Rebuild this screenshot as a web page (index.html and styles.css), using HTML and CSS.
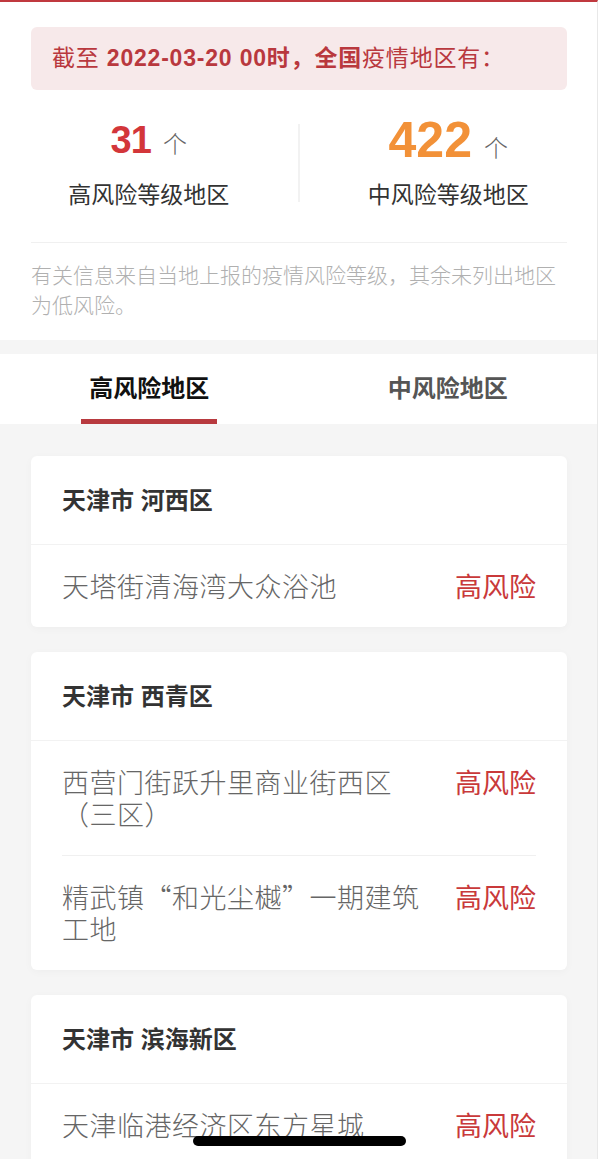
FILE: index.html
```html
<!DOCTYPE html>
<html lang="zh-CN">
<head>
    <meta charset="UTF-8">
    <meta name="viewport" content="width=device-width, initial-scale=1.0">
    <title>风险等级地区</title>
    <link rel="stylesheet" href="styles.css">
</head>
<body>
<div class="page">
    <section class="summary">
        <div class="notice">截至 <strong>2022-03-20 00时，全国</strong>疫情地区有：</div>
        <div class="stats">
            <div class="stat">
                <div class="stat-num"><span class="num high">31</span><span class="unit">个</span></div>
                <div class="stat-label">高风险等级地区</div>
            </div>
            <div class="divider"></div>
            <div class="stat">
                <div class="stat-num"><span class="num mid">422</span><span class="unit">个</span></div>
                <div class="stat-label">中风险等级地区</div>
            </div>
        </div>
        <p class="note">有关信息来自当地上报的疫情风险等级，其余未列出地区为低风险。</p>
    </section>

    <nav class="tabs">
        <div class="tab active">高风险地区</div>
        <div class="tab">中风险地区</div>
    </nav>

    <main class="area-list">
        <div class="card">
            <div class="card-title">天津市 河西区</div>
            <div class="rows">
                <div class="row">
                    <span class="name">天塔街清海湾大众浴池</span>
                    <span class="level">高风险</span>
                </div>
            </div>
        </div>
        <div class="card">
            <div class="card-title">天津市 西青区</div>
            <div class="rows">
                <div class="row">
                    <span class="name">西营门街跃升里商业街西区（三区）</span>
                    <span class="level">高风险</span>
                </div>
                <div class="row">
                    <span class="name">精武镇“和光尘樾”一期建筑工地</span>
                    <span class="level">高风险</span>
                </div>
            </div>
        </div>
        <div class="card">
            <div class="card-title">天津市 滨海新区</div>
            <div class="rows">
                <div class="row">
                    <span class="name">天津临港经济区东方星城</span>
                    <span class="level">高风险</span>
                </div>
            </div>
        </div>
    </main>
</div>
<div class="home-bar"></div>
</body>
</html>
```

FILE: styles.css
```css
body {
    margin: 0;
    padding: 0;
    background-color: #ffffff;
    font-family: "Liberation Sans", "Noto Sans CJK SC", sans-serif;
}
.page {
    width: 598px;
    min-height: 1159px;
    background-color: #f5f5f5;
    border-right: 1px solid #e8e8e8;
    border-top: 2px solid #c0393f;
    box-sizing: border-box;
}
.summary {
    background-color: white;
    padding: 25px 30px 21px 31px;
}
.notice {
    height: 63px;
    line-height: 63px;
    padding-left: 21px;
    border-radius: 6px;
    background-color: #f7e9ea;
    color: #b9383e;
    font-size: 23px;
    letter-spacing: 0.8px;
}
.notice strong {
    font-weight: bold;
}
.stats {
    display: flex;
    align-items: center;
    margin: 25px -30px 0 -31px;
}
.stat {
    flex: 1;
    text-align: center;
}
.divider {
    width: 2px;
    height: 78px;
    background-color: #f2f2f2;
}
.stat-num {
    height: 50px;
    line-height: 50px;
}
.num {
    font-weight: 600;
}
.num.high {
    color: #d3363a;
    font-size: 38px;
    letter-spacing: -1px;
}
.num.mid {
    color: #f29138;
    font-size: 50px;
}
.unit {
    margin-left: 12px;
    font-size: 24px;
    color: #666;
    font-family: "Noto Sans CJK SC", sans-serif;
    font-weight: 300;
}
.stat-label {
    margin-top: 15px;
    line-height: 30px;
    font-size: 23px;
    color: #333;
}
.note {
    margin: 32px 0 0;
    padding-top: 16px;
    border-top: 1px solid #f0f0f0;
    font-size: 21px;
    line-height: 30px;
    color: #b0b0b0;
    font-family: "Noto Sans CJK SC", sans-serif;
    font-weight: 300;
}
.tabs {
    display: flex;
    margin-top: 14px;
    height: 70px;
    background-color: white;
}
.tab {
    flex: 1;
    position: relative;
    text-align: center;
    line-height: 70px;
    font-size: 24px;
    font-weight: bold;
    color: #555;
}
.tab.active {
    color: #111;
}
.tab.active::after {
    content: "";
    position: absolute;
    left: 50%;
    bottom: 0;
    width: 136px;
    height: 5px;
    margin-left: -68px;
    background-color: #b83a3f;
}
.area-list {
    display: flex;
    flex-direction: column;
    gap: 25px;
    padding: 32px 30px 32px 31px;
}
.card {
    background-color: white;
    border-radius: 6px;
    box-shadow: 0 2px 8px rgba(0, 0, 0, 0.03);
}
.card-title {
    height: 88px;
    line-height: 90px;
    padding: 0 31px;
    border-bottom: 1px solid #f2f2f2;
    font-size: 24px;
    font-weight: bold;
    color: #333;
}
.rows {
    padding: 0 31px;
}
.row {
    display: flex;
    align-items: flex-start;
    padding: 25px 0;
    line-height: 32px;
}
.row + .row {
    border-top: 1px solid #f0f0f0;
}
.name {
    flex: 1;
    margin-right: 24px;
    font-size: 27px;
    letter-spacing: 0.5px;
    color: #666;
    font-family: "Noto Sans CJK SC", sans-serif;
    font-weight: 300;
}
.level {
    font-size: 27px;
    color: #c9393a;
    font-family: "Noto Sans CJK SC", sans-serif;
}
.home-bar {
    position: fixed;
    left: 193px;
    bottom: 13px;
    width: 213px;
    height: 10px;
    border-radius: 5px;
    background-color: #000;
}
```
